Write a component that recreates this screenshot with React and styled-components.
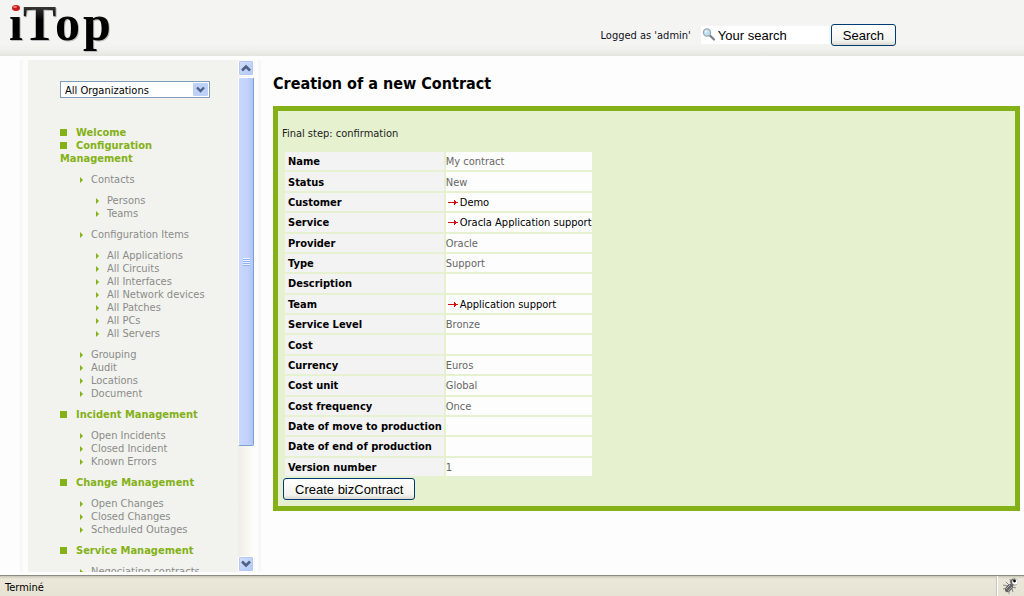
import React from "react";
import styled, { createGlobalStyle } from "styled-components";

const GlobalStyle = createGlobalStyle`
  * {
    box-sizing: border-box;
  }
  body {
    margin: 0;
    background: #fdfdfd;
    color: #000;
    font-family: "DejaVu Sans Condensed", "DejaVu Sans", Tahoma, sans-serif;
    font-size: 11px;
    line-height: 13px;
  }
`;

const Page = styled.div`
  display: flex;
  flex-direction: column;
  height: 100vh;
`;

const Header = styled.header`
  display: flex;
  align-items: flex-start;
  justify-content: space-between;
  flex: none;
  height: 56px;
  padding-right: 128px;
  background: linear-gradient(#f4f4f2 44px, #f1f1ee 48px, #e5e5e0);
`;

const SearchForm = styled.form`
  display: flex;
  align-items: center;
  padding-top: 24px;
`;

const LoggedAs = styled.span`
  margin-right: 10px;
  color: #112;
`;

const SearchField = styled.label`
  display: flex;
  align-items: center;
  width: 128px;
  height: 18px;
  margin-right: 2px;
  background: #fff;

  input {
    flex: 1;
    min-width: 0;
    height: 18px;
    padding: 0 1px;
    border: 0;
    background: none;
    font: 13px "Liberation Sans", Arial, sans-serif;
  }
`;

const Button = styled.button`
  height: 22px;
  padding: 0 11px;
  border: 1px solid #003c74;
  border-radius: 3px;
  background: linear-gradient(#fff, #f2f2ee 80%, #dcd8cf);
  color: #000;
  font: 13px "Liberation Sans", Arial, sans-serif;
  white-space: nowrap;
`;

const Body = styled.div`
  display: flex;
  flex: 1;
  min-height: 0;
`;

const Aside = styled.aside`
  display: flex;
  flex: none;
  width: 242px;
  margin: 4px 0 3px 20px;
  padding: 0 8px;
  background: linear-gradient(90deg, #f4f4f4, #fdfdfd 4px, #fdfdfd 238px, #f4f4f4 239px, #fdfdfd);
`;

const Menu = styled.nav`
  flex: 1;
  padding: 21px 28px 0 32px;
  overflow: hidden;
  background: #f2f3ee;
`;

const Select = styled.select`
  display: block;
  width: 150px;
  height: 17px;
  margin-bottom: 28px;
  padding: 1px 0 0 4px;
  border: 1px solid #7f9db9;
  border-radius: 0;
  appearance: none;
  color: #000;
  font: inherit;
  background: #fff
    url("data:image/svg+xml,%3Csvg xmlns='http://www.w3.org/2000/svg' width='15' height='13'%3E%3Crect width='15' height='13' rx='1' fill='%23bdd0f8'/%3E%3Cpath d='M4 4.5l3.5 3.5L11 4.5' fill='none' stroke='%234d6185' stroke-width='2.4'/%3E%3C/svg%3E")
    no-repeat right 1px center;
`;

const MenuList = styled.ul`
  margin: 0;
  padding: 0;
  list-style: none;
`;

const SubList = styled(MenuList)`
  margin: 8px 0;
  padding-left: ${props => (props.$deep ? 16 : 19)}px;
`;

const GroupLink = styled.a`
  color: #84b117;
  font-weight: bold;
  text-decoration: none;

  &::before {
    content: "";
    display: inline-block;
    width: 7px;
    height: 7px;
    margin-right: 9px;
    background: #84b117;
  }
`;

const ItemLink = styled.a`
  display: flex;
  align-items: center;
  color: #8b8b8b;
  text-decoration: none;
  white-space: nowrap;

  &::before {
    content: "";
    width: 0;
    margin: 0 8px 0 1px;
    border: solid transparent;
    border-width: 3px 0 3px 3px;
    border-left-color: #84b117;
  }
`;

const Scrollbar = styled.div`
  display: flex;
  flex-direction: column;
  flex: none;
  width: 16px;
  background: linear-gradient(90deg, #eeede5, #fefefb);
`;

const ScrollButton = styled.button`
  display: flex;
  align-items: center;
  justify-content: center;
  flex: none;
  width: 16px;
  height: 16px;
  padding: 0;
  border: 1px solid #fff;
  border-radius: 2px;
  background: linear-gradient(135deg, #d3e0fd, #b2c8f5);
  box-shadow: inset 0 0 0 1px #b4c8f2;
`;

const Thumb = styled.div`
  display: flex;
  flex-direction: column;
  align-items: center;
  justify-content: center;
  gap: 1px;
  height: 72%;
  margin: 1px 0 auto;
  border: 1px solid #fff;
  border-right-color: #7d9fd3;
  border-bottom-color: #7d9fd3;
  border-radius: 2px;
  background: linear-gradient(90deg, #c9d7fc, #c2d2fb 60%, #afc6f5);

  i {
    width: 7px;
    height: 1px;
    background: #eef4fe;
    box-shadow: 0 1px #8cb0f8;
  }
`;

const Main = styled.main`
  flex: 1;
  min-width: 0;
  padding: 18px 4px 0 11px;
`;

const Title = styled.h1`
  margin: 0 0 12px;
  font-size: 16px;
  line-height: 20px;
`;

const Wizard = styled.form`
  padding: 16px 4px 6px;
  border: 5px solid #84b117;
  background: #e5f1cf;

  p {
    margin: 0 0 10px;
    color: #222;
  }
`;

const WizardFields = styled.div`
  padding: 0 1px;
`;

const Details = styled.table`
  height: 328px;
  border-spacing: 2px;

  th,
  td {
    height: 18px;
    padding: 0;
    white-space: nowrap;
  }
  th {
    padding: 1px 2px 0 3px;
    background: #f3f3f3;
    text-align: left;
  }
  td {
    padding-top: 1px;
    background: #fdfdfd;
    color: #666;
  }
  a {
    display: flex;
    align-items: center;
    gap: 1px;
    color: #000;
    text-decoration: none;
  }
`;

const StatusBar = styled.footer`
  display: flex;
  flex: none;
  height: 21px;
  border-top: 1px solid #8d8b81;
  background: linear-gradient(#c9c6b9, #ebe8d9 3px, #e6e3d4);

  span {
    flex: 1;
    padding: 5px;
  }
`;

const StatusIcon = styled.div`
  width: 27px;
  padding: 1px 0 0 4px;
  border-left: 1px solid #fff;
  box-shadow: -1px 0 #c9c6b9;
`;

const menu = [
  { label: "Welcome" },
  {
    label: "Configuration Management",
    items: [
      { label: "Contacts", items: ["Persons", "Teams"] },
      {
        label: "Configuration Items",
        items: [
          "All Applications",
          "All Circuits",
          "All Interfaces",
          "All Network devices",
          "All Patches",
          "All PCs",
          "All Servers"
        ]
      },
      { label: "Grouping" },
      { label: "Audit" },
      { label: "Locations" },
      { label: "Document" }
    ]
  },
  {
    label: "Incident Management",
    items: [
      { label: "Open Incidents" },
      { label: "Closed Incident" },
      { label: "Known Errors" }
    ]
  },
  {
    label: "Change Management",
    items: [
      { label: "Open Changes" },
      { label: "Closed Changes" },
      { label: "Scheduled Outages" }
    ]
  },
  {
    label: "Service Management",
    items: [{ label: "Negociating contracts" }]
  }
];

const details = [
  { name: "Name", value: "My contract" },
  { name: "Status", value: "New" },
  { name: "Customer", value: "Demo", link: true },
  { name: "Service", value: "Oracla Application support", link: true },
  { name: "Provider", value: "Oracle" },
  { name: "Type", value: "Support" },
  { name: "Description", value: "" },
  { name: "Team", value: "Application support", link: true },
  { name: "Service Level", value: "Bronze" },
  { name: "Cost", value: "" },
  { name: "Currency", value: "Euros" },
  { name: "Cost unit", value: "Global" },
  { name: "Cost frequency", value: "Once" },
  { name: "Date of move to production", value: "" },
  { name: "Date of end of production", value: "" },
  { name: "Version number", value: "1" }
];

const Logo = () => (
  <svg width="120" height="56" overflow="visible" role="img" aria-label="iTop">
    <defs>
      <linearGradient id="ink" x1="0" y1="0" x2="0" y2="1">
        <stop offset="0" stopColor="#666" />
        <stop offset="0.45" stopColor="#000" />
      </linearGradient>
    </defs>
    <g fontFamily="Liberation Serif, serif" fontWeight="bold" fontSize="50">
      <text x="10 24 56 84" y="41" fill="#bbb">
        ıTop
      </text>
      <text x="9 23 55 83" y="40" fill="url(#ink)">
        ıTop
      </text>
    </g>
    <ellipse cx="16" cy="8" rx="4" ry="3" fill="#cc1a1a" />
    <ellipse cx="15" cy="7" rx="2" ry="1" fill="#ee7a70" />
  </svg>
);

const Magnifier = () => (
  <svg width="16" height="16" viewBox="0 0 16 16" aria-hidden="true">
    <path d="M9 8.5l4 4" stroke="#777d8c" strokeWidth="2.2" strokeLinecap="round" />
    <circle cx="6" cy="5.5" r="3.6" fill="#bfe0f3" stroke="#9aa8b4" strokeWidth="1.2" />
    <circle cx="5" cy="4.5" r="1.2" fill="#e8f6fd" />
  </svg>
);

const Chevron = ({ down }) => (
  <svg width="10" height="8" viewBox="0 0 10 8" aria-hidden="true">
    <path
      d={down ? "M1 1.5L5 5.5 9 1.5" : "M1 6.5L5 2.5 9 6.5"}
      fill="none"
      stroke="#4d6185"
      strokeWidth="2.6"
    />
  </svg>
);

const RedArrow = () => (
  <svg width="13" height="7" viewBox="0 0 13 7" aria-hidden="true">
    <path d="M2 3h6V1h1v1h1v1h2v1h-2v1H9v1H8V4H2z" fill="#d01010" />
  </svg>
);

const Bug = () => (
  <svg width="18" height="18" viewBox="0 0 18 18" aria-hidden="true">
    <path
      d="M1 8l5 1M1 12l4-1M4 5l3 3M7 17l0-4M11 15l-1-4M14 11l-4-1M8 2l1 4"
      stroke="#888"
      fill="none"
    />
    <ellipse cx="7" cy="11" rx="5" ry="3" transform="rotate(-45 7 11)" fill="#666" />
    <path d="M4 12l4-4M6 14l4-4" stroke="#aaa" />
    <circle cx="12" cy="5" r="3.6" fill="#666" />
    <circle cx="13" cy="5" r="2.8" fill="#fff" />
    <circle cx="12.5" cy="4" r="1.4" fill="#000" />
  </svg>
);

const SideMenu = () => (
  <Aside>
    <Menu>
      <Select aria-label="Organization">
        <option>All Organizations</option>
      </Select>
      <MenuList>
        {menu.map(group => (
          <li key={group.label}>
            <GroupLink href="#">{group.label}</GroupLink>
            {group.items ? (
              <SubList>
                {group.items.map(item => (
                  <li key={item.label}>
                    <ItemLink href="#">{item.label}</ItemLink>
                    {item.items ? (
                      <SubList $deep>
                        {item.items.map(label => (
                          <li key={label}>
                            <ItemLink href="#">{label}</ItemLink>
                          </li>
                        ))}
                      </SubList>
                    ) : null}
                  </li>
                ))}
              </SubList>
            ) : null}
          </li>
        ))}
      </MenuList>
    </Menu>
    <Scrollbar>
      <ScrollButton aria-label="Scroll up">
        <Chevron />
      </ScrollButton>
      <Thumb>
        <i />
        <i />
        <i />
        <i />
      </Thumb>
      <ScrollButton aria-label="Scroll down">
        <Chevron down />
      </ScrollButton>
    </Scrollbar>
  </Aside>
);

const App = () => (
  <Page>
    <GlobalStyle />
    <Header>
      <Logo />
      <SearchForm>
        <LoggedAs>Logged as 'admin'</LoggedAs>
        <SearchField>
          <Magnifier />
          <input aria-label="Search" defaultValue="Your search" />
        </SearchField>
        <Button type="button">Search</Button>
      </SearchForm>
    </Header>
    <Body>
      <SideMenu />
      <Main>
        <Title>Creation of a new Contract</Title>
        <Wizard>
          <p>Final step: confirmation</p>
          <WizardFields>
            <Details>
              <tbody>
                {details.map(row => (
                  <tr key={row.name}>
                    <th scope="row">{row.name}</th>
                    <td>
                      {row.link ? (
                        <a href="#">
                          <RedArrow />
                          {row.value}
                        </a>
                      ) : (
                        row.value
                      )}
                    </td>
                  </tr>
                ))}
              </tbody>
            </Details>
            <Button type="button">Create bizContract</Button>
          </WizardFields>
        </Wizard>
      </Main>
    </Body>
    <StatusBar>
      <span>Terminé</span>
      <StatusIcon>
        <Bug />
      </StatusIcon>
    </StatusBar>
  </Page>
);

export default App;
